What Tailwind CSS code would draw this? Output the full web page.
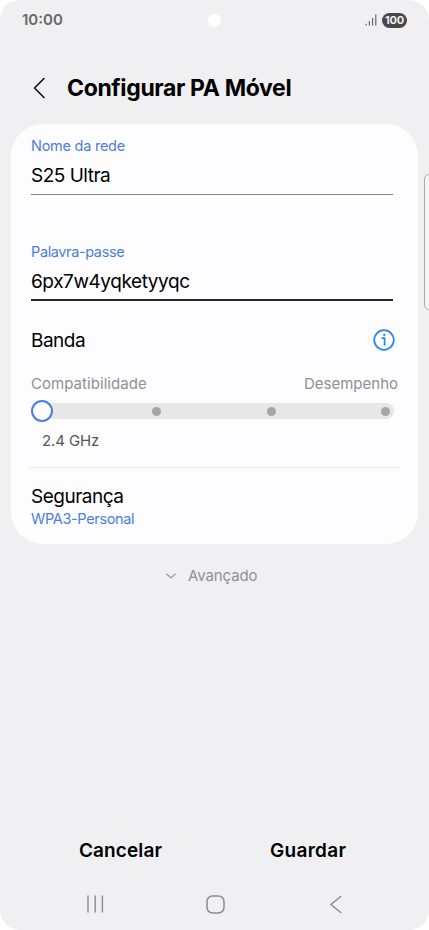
<!DOCTYPE html>
<html lang="pt"><head><meta charset="utf-8"><title>Configurar PA Móvel</title>
<script src="https://cdn.jsdelivr.net/npm/@tailwindcss/browser@4"></script></head>
<body class="bg-white font-['Inter',sans-serif]">
<main class="relative flex h-[930px] w-[429px] flex-col overflow-hidden rounded-[20px] bg-[#f0f0f2] whitespace-nowrap text-black">
  <header class="flex h-10 shrink-0 items-center justify-between px-[22px]">
    <span class="w-[52px] text-[15px] font-semibold text-[#68686a]">10:00</span>
    <span class="ml-[-11px] size-[13px] rounded-full bg-white"></span>
    <span class="flex items-center gap-[5px]">
      <svg class="h-3 w-[12px]" viewBox="0 0 12 12" fill="none" stroke="#68686a" stroke-width="1.2"><path d="M1.2 9.8V11.5M4.4 7V11.5M7.6 4V11.5M10.8 .5V11.5"/></svg>
      <span class="flex h-[15px] w-[25px] items-center justify-center rounded-full bg-[#48484a] text-[11px] font-bold tracking-[-0.2px] text-[#f0f0f2]">100</span>
    </span>
  </header>
  <div class="flex h-[84px] shrink-0 items-center pt-3 pl-[33px]">
    <svg class="h-[22px] w-3" viewBox="0 0 12 22" fill="none" stroke="#111" stroke-width="1.6" stroke-linecap="round" stroke-linejoin="round"><path d="M11 1.5 1.5 11 11 20.5"/></svg>
    <h1 class="ml-[22px] text-[23px] font-bold tracking-[-0.36px]">Configurar PA Móvel</h1>
  </div>
  <section class="ml-[11px] flex h-[420px] w-[407px] shrink-0 flex-col rounded-[32px] bg-[#fdfdff] px-5">
    <div class="flex h-[71px] w-[362px] flex-col border-b border-[#858587] pt-3">
      <label class="text-[14.5px] leading-5 tracking-[-0.25px] text-[#4d7dd8]">Nome da rede</label>
      <p class="mt-1.5 text-[19px] leading-7 tracking-[-0.5px]">S25 Ultra</p>
    </div>
    <div class="mt-9 flex h-[70px] w-[362px] flex-col border-b-2 border-[#252528] pt-[11px]">
      <label class="text-[14.5px] leading-5 tracking-[-0.38px] text-[#4d7dd8]">Palavra-passe</label>
      <p class="mt-1.5 text-[19px] leading-7 tracking-[-0.43px]">6px7w4yqketyyqc</p>
    </div>
    <div class="mt-[23px] flex h-8 items-center justify-between pr-[3px] text-[19px] tracking-[-0.5px]"><span class="pt-0.5">Banda</span>
      <svg class="size-[22px]" viewBox="0 0 22 22" fill="none" stroke="#2585e8" stroke-width="1.7"><circle cx="11" cy="11" r="9.8"/><path d="M8.6 9.1h3V16.4"/><circle cx="11.3" cy="5.9" r="1.15" fill="#2585e8" stroke="none"/></svg>
    </div>
    <div class="mt-4 flex h-6 items-center justify-between text-[15px] text-[#909092]"><span class="tracking-[0.05px]">Compatibilidade</span><span>Desempenho</span></div>
    <div class="mt-1 flex h-[22px] w-[363px] items-center">
      <div class="flex h-4 w-full items-center rounded-full bg-[#e7e7ea]">
        <div class="flex w-[366px] shrink-0 items-center justify-between">
          <i class="size-[22px] rounded-full border-2 border-[#4a7de0] bg-[#fdfdff]"></i>
          <i class="flex w-[22px] justify-center"><b class="size-[9px] rounded-full bg-[#a6a6a8]"></b></i>
          <i class="flex w-[22px] justify-center"><b class="size-[9px] rounded-full bg-[#a6a6a8]"></b></i>
          <i class="flex w-[22px] justify-center"><b class="size-[9px] rounded-full bg-[#a6a6a8]"></b></i>
        </div>
      </div>
    </div>
    <p class="mt-[7px] ml-[11px] text-[15px] leading-6 tracking-[-0.1px] text-[#565658]">2.4 GHz</p>
    <hr class="mt-3.5 -ml-0.5 w-[371px] border-[#e8e8ea]">
    <p class="mt-[15px] text-[19px] leading-7 tracking-[-0.5px]">Segurança</p>
    <p class="-mt-0.5 text-[14.5px] leading-5 tracking-[-0.35px] text-[#4d7dd8]">WPA3-Personal</p>
  </section>
  <div class="mt-5 flex h-6 items-center pl-[166px] text-[15px] tracking-[-0.1px] text-[#909092]">
    <svg class="mr-3 h-[6px] w-[10px]" viewBox="0 0 10 6" fill="none" stroke="#98989a" stroke-width="1.2"><path d="M.5.7 5 5 9.5.7"/></svg>Avançado
  </div>
  <footer class="mt-auto">
    <div class="flex h-8 items-center text-[19px] font-semibold"><span class="ml-[79px] w-[191px] tracking-[0.1px]">Cancelar</span><span class="tracking-[0.3px]">Guardar</span></div>
    <nav class="mt-[27px] flex h-5 items-center pl-[86px]">
      <svg class="h-[18px] w-[18px]" viewBox="0 0 18 18" stroke="#8c8c8e" stroke-width="1.4" stroke-linecap="round"><path d="M2 1V17M9.2 1V17M16.4 1V17"/></svg>
      <svg class="ml-[102px] size-[19px]" viewBox="0 0 19 19" fill="none" stroke="#8c8c8e" stroke-width="1.5"><rect x="1" y="1" width="17" height="17" rx="5.5"/></svg>
      <svg class="ml-[104px] h-[19px] w-[13px]" viewBox="0 0 13 19" fill="none" stroke="#8c8c8e" stroke-width="1.5" stroke-linecap="round" stroke-linejoin="round"><path d="M11.8 1.5 1.8 9.5 11.8 17.5"/></svg>
    </nav>
    <div class="h-4"></div>
  </footer>
  <div class="absolute top-[174px] left-[424px] h-[136px] w-3 rounded-[5px] border border-[#aaaaac] bg-[#f4f4f5]"></div>
</main>
</body></html>
